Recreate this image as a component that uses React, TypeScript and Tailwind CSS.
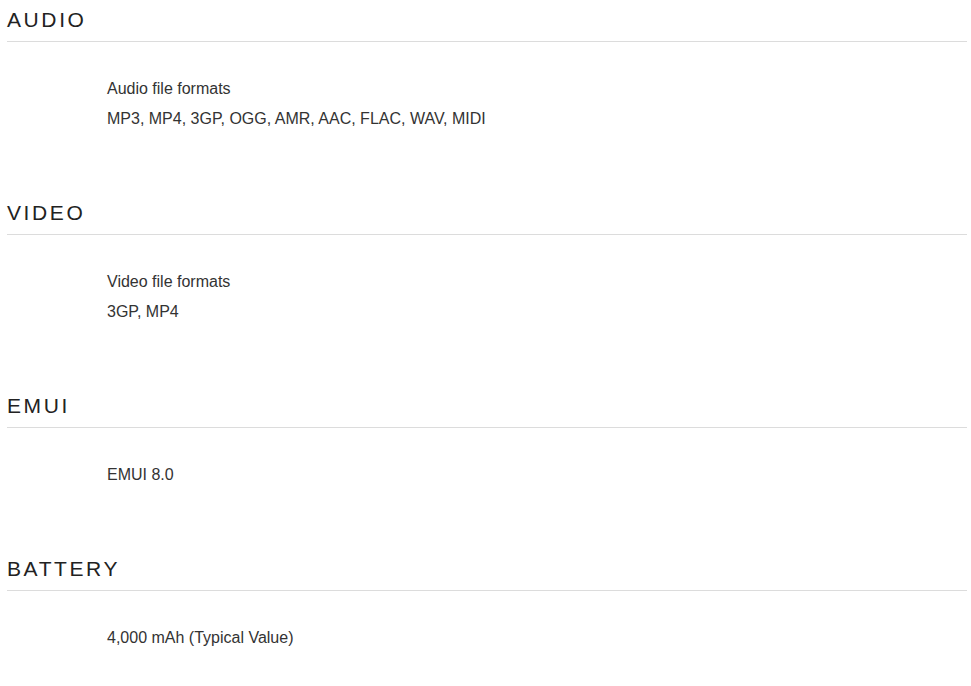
const SECTIONS: { title: string; rows: string[] }[] = [
  { title: "AUDIO", rows: ["Audio file formats", "MP3, MP4, 3GP, OGG, AMR, AAC, FLAC, WAV, MIDI"] },
  { title: "VIDEO", rows: ["Video file formats", "3GP, MP4"] },
  { title: "EMUI", rows: ["EMUI 8.0"] },
  { title: "BATTERY", rows: ["4,000 mAh (Typical Value)"] },
];

export default function App() {
  return (
    <div className="min-h-[686px] bg-white pl-[7px] pr-[4px] pt-[6px] font-['Liberation_Sans',Arial,sans-serif]">
      {SECTIONS.map((s) => (
        <section key={s.title} className="pb-[65px] last:pb-0">
          <h2 className="h-[28px] border-b border-[#dcdcdc] pb-[7px] box-content text-[21px] leading-[28px] tracking-[2.6px] text-[#222]">
            {s.title}
          </h2>
          <div className="pl-[100px] pt-[32px]">
            {s.rows.map((r) => (
              <p key={r} className="h-[30px] text-[16px] leading-[30px] text-[#333]">
                {r}
              </p>
            ))}
          </div>
        </section>
      ))}
    </div>
  );
}
